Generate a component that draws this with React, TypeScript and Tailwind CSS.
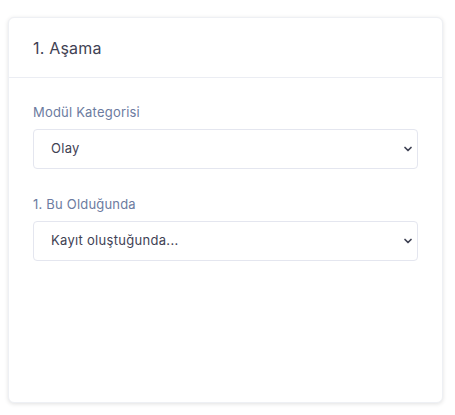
import { ChevronDown } from 'lucide-react';

const font = { fontFamily: 'Inter, "Open Sans", sans-serif' };

function SelectField({ label, value, options }: { label: string; value: string; options: string[] }) {
  return (
    <div className="flex flex-col">
      <label className="text-[13px] leading-5 tracking-[0.2px] text-[#6c7ba0] mb-[7px]">{label}</label>
      <div className="relative">
        <select
          defaultValue={value}
          className="appearance-none w-full h-10 rounded border border-[#e4e6ef] bg-white pl-[17px] pr-8 text-[13px] tracking-[0.3px] text-[#3f4254] outline-none"
        >
          {options.map((o) => (
            <option key={o}>{o}</option>
          ))}
        </select>
        <ChevronDown
          className="pointer-events-none absolute right-[4px] top-1/2 -translate-y-1/2 h-3 w-3 text-[#3f4254]"
          strokeWidth={3.5}
        />
      </div>
    </div>
  );
}

export default function App() {
  return (
    <div className="bg-white pl-2 pr-3 pt-[17px] pb-3 w-[455px] h-[415px]" style={font}>
      <div className="h-[386px] rounded-md bg-white border border-[#eef0f4] shadow-[0_1px_4px_rgba(0,0,0,0.12)] flex flex-col">
        <div className="h-[60px] flex items-center px-6 border-b border-[#ebedf3]">
          <h3 className="text-[16px] font-normal tracking-[0.2px] text-[#3f4254]">1. Aşama</h3>
        </div>
        <div className="px-6 pt-6 flex flex-col gap-[25px]">
          <SelectField label="Modül Kategorisi" value="Olay" options={['Olay', 'Kayıt', 'Görev']} />
          <SelectField
            label="1. Bu Olduğunda"
            value="Kayıt oluştuğunda..."
            options={['Kayıt oluştuğunda...', 'Kayıt güncellendiğinde...', 'Kayıt silindiğinde...']}
          />
        </div>
      </div>
    </div>
  );
}
